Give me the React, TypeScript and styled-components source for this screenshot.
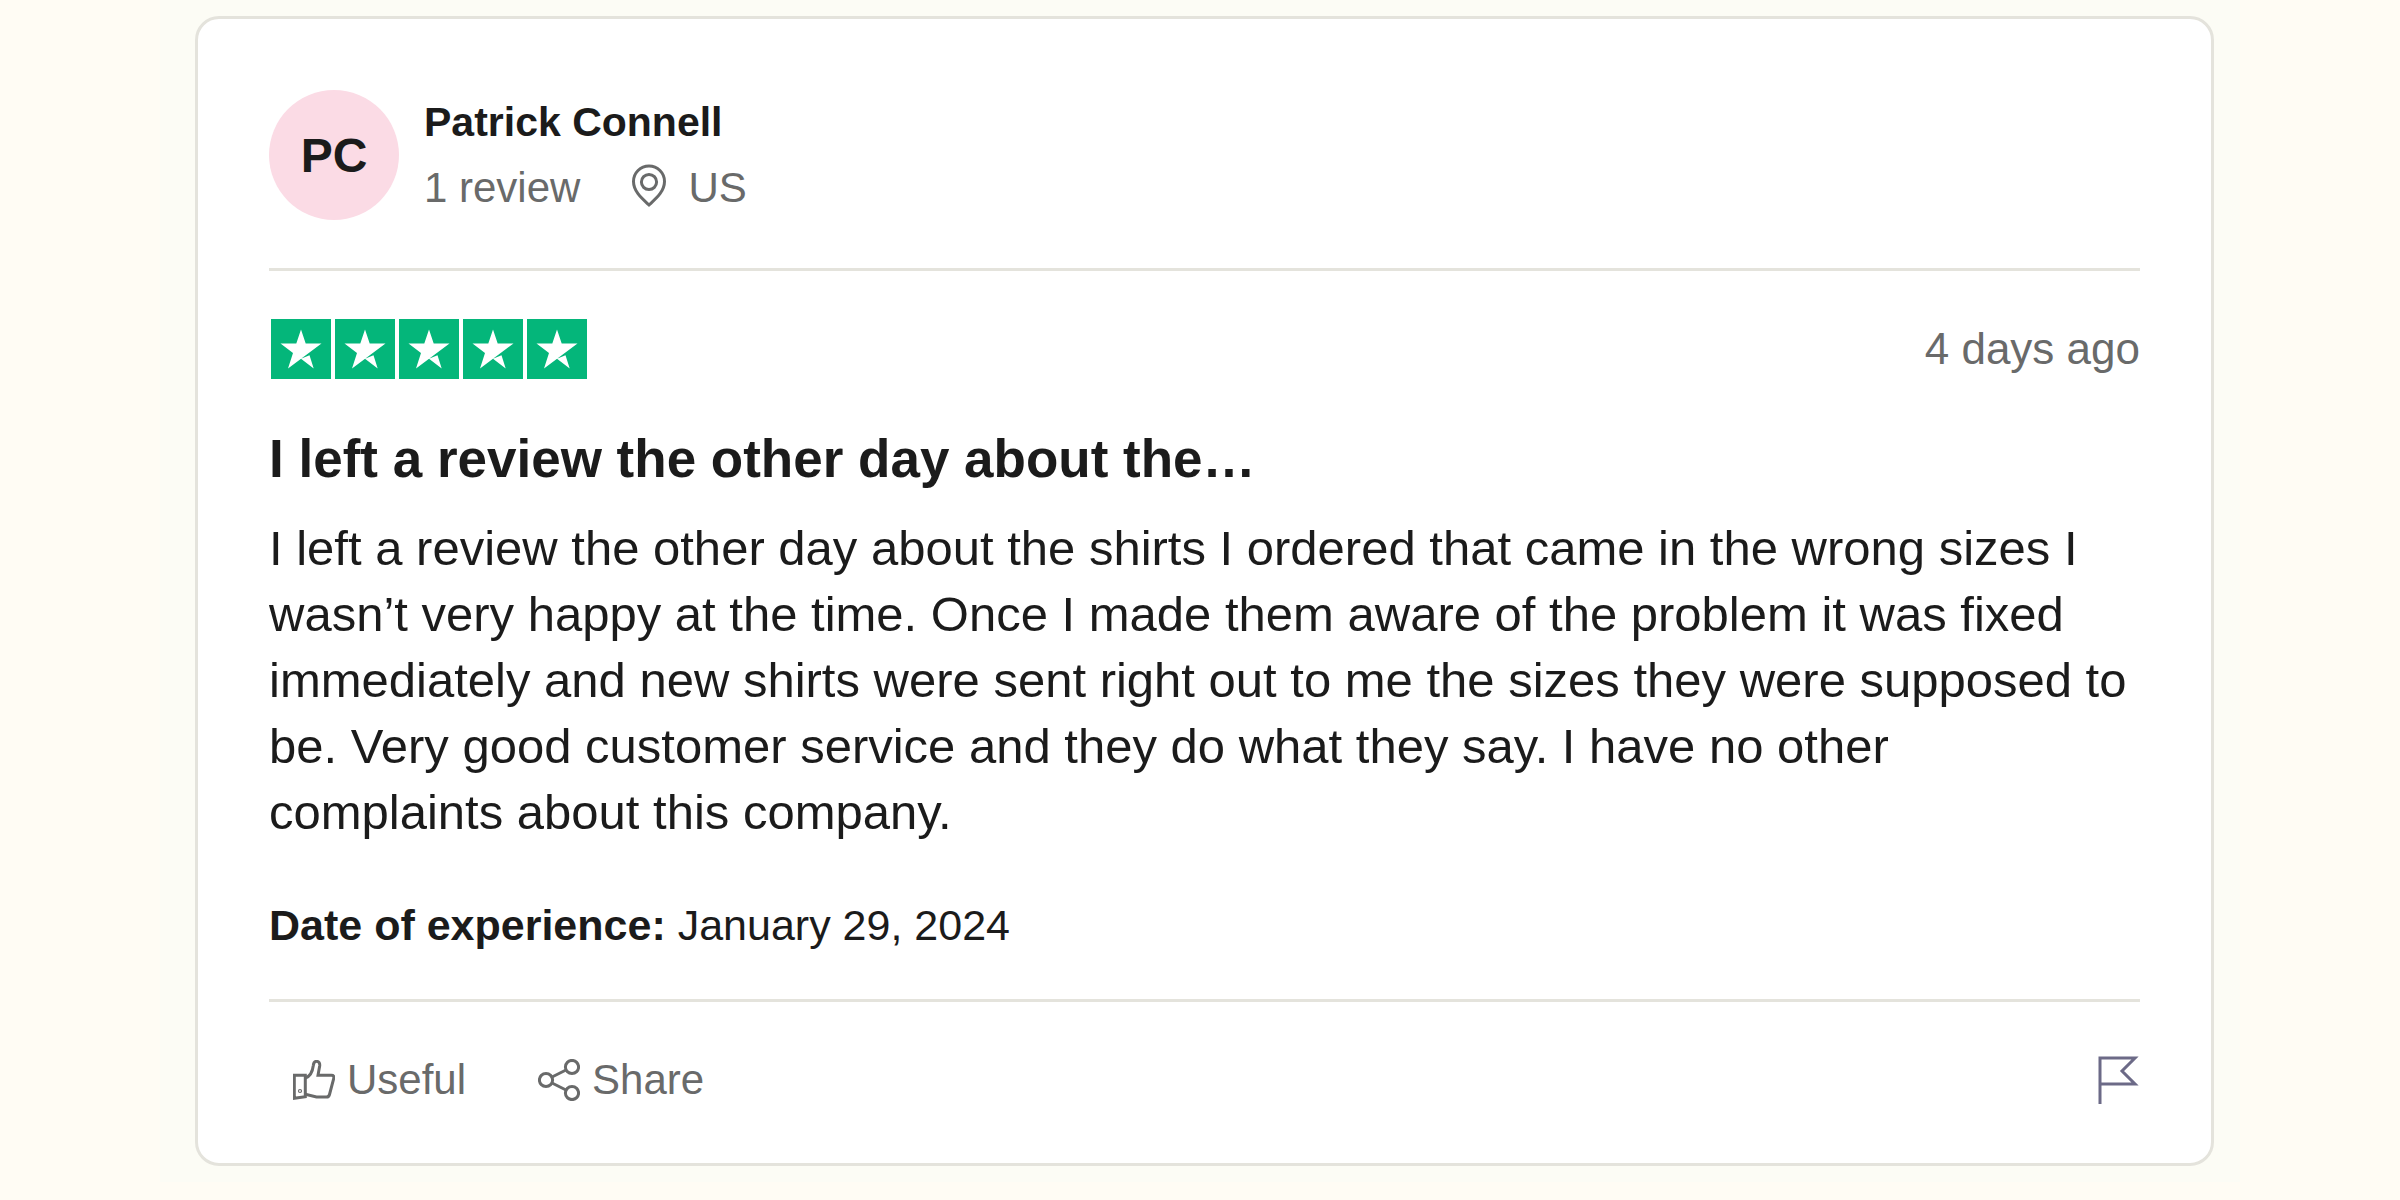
import React from "react";
import styled, { createGlobalStyle } from "styled-components";

const ink = "#1b1b1b";
const muted = "#696a6a";
const line = "#e4e3dc";

const GlobalStyle = createGlobalStyle`
  *, *::before, *::after { box-sizing: border-box; }
  body {
    margin: 0;
    background: #fffcf4;
    color: ${ink};
    font-family: "Liberation Sans", Arial, sans-serif;
  }
  h2, p { margin: 0; }
`;

const Mat = styled.main`
  margin: 0 160px;
  padding: 16px 26px 16px 35px;
  background: #fcfcf5;
`;

const Card = styled.article`
  padding: 71px;
  padding-bottom: 53px;
  border: 3px solid ${line};
  border-radius: 24px;
  background: #fff;
`;

const Header = styled.header`
  display: flex;
  align-items: center;
  gap: 25px;
  padding-bottom: 48px;
  border-bottom: 3px solid ${line};
`;

const Avatar = styled.div`
  display: grid;
  place-items: center;
  width: 130px;
  height: 130px;
  border-radius: 50%;
  background: #fbdbe5;
  font-size: 48px;
  font-weight: 700;
`;

const Author = styled.div`
  display: grid;
  gap: 10px;
  font-size: 42px;
  line-height: 56px;
`;

const Name = styled.a`
  color: ${ink};
  font-size: 41px;
  font-weight: 700;
  text-decoration: none;
`;

const Meta = styled.div`
  display: flex;
  align-items: center;
  gap: 50px;
  color: ${muted};
`;

const Place = styled.span`
  display: flex;
  align-items: center;
  gap: 20px;
`;

const RatingRow = styled.div`
  display: flex;
  align-items: center;
  justify-content: space-between;
  margin-top: 48px;
`;

const Stars = styled.div`
  display: flex;
  gap: 4px;
  padding-left: 2px;
`;

const Star = styled.svg`
  width: 60px;
  height: 60px;
  background: #04b67a;
`;

const Age = styled.time`
  color: ${muted};
  font-size: 44px;
`;

const Title = styled.h2`
  margin-top: 48px;
  font-size: 53px;
  line-height: 64px;
`;

const Body = styled.p`
  margin-top: 24px;
  padding-right: 8px;
  font-size: 49px;
  line-height: 66px;
`;

const Experience = styled.p`
  margin-top: 52px;
  font-size: 43px;
  line-height: 56px;
`;

const Footer = styled.footer`
  display: flex;
  align-items: center;
  gap: 72px;
  margin-top: 46px;
  padding: 48px 0 0 24px;
  border-top: 3px solid ${line};
`;

const Action = styled.button<{ $end?: boolean }>`
  display: flex;
  align-items: center;
  gap: 12px;
  margin-left: ${(p) => (p.$end ? "auto" : "0")};
  padding: 0;
  border: 0;
  background: none;
  color: ${(p) => (p.$end ? "#6c6a87" : muted)};
  font: inherit;
  font-size: 42px;
  line-height: 60px;
  cursor: pointer;
`;

const Icon = styled.svg`
  display: block;
  flex: none;
  fill: none;
  stroke: currentColor;
  stroke-width: 3;
`;

export default function App() {
  return (
    <>
      <GlobalStyle />
      <Mat>
        <Card>
          <Header>
            <Avatar aria-hidden="true">PC</Avatar>
            <Author>
              <Name href="#">Patrick Connell</Name>
              <Meta>
                <span>1 review</span>
                <Place>
                  <Icon width="38" height="48" viewBox="0 0 38 48">
                    <path d="M19 41C12 34.500 3.500 27.500 3.500 17.500a15.500 15.500 0 0 1 31 0C34.500 27.500 26 34.500 19 41z" />
                    <circle cx="19" cy="18" r="7.600" />
                  </Icon>
                  US
                </Place>
              </Meta>
            </Author>
          </Header>

          <RatingRow>
            <Stars role="img" aria-label="Rated 5 out of 5 stars">
              {[1, 2, 3, 4, 5].map((n) => (
                <Star key={n} viewBox="0 0 60 60">
                  <path
                    fill="#fff"
                    d="M30 10.500l4.700 14H50.500L17 49.500l5-15.500L9.500 24.500H25.300zM30 39.700l8.500-3.400L42.700 49.500z"
                  />
                </Star>
              ))}
            </Stars>
            <Age>4 days ago</Age>
          </RatingRow>

          <Title>I left a review the other day about the…</Title>
          <Body>
            I left a review the other day about the shirts I ordered that came in the wrong sizes I
            wasn’t very happy at the time. Once I made them aware of the problem it was fixed
            immediately and new shirts were sent right out to me the sizes they were supposed to
            be. Very good customer service and they do what they say. I have no other
            complaints about this company.
          </Body>
          <Experience>
            <b>Date of experience:</b> January 29, 2024
          </Experience>

          <Footer>
            <Action type="button">
              <Icon width="42" height="40" viewBox="0 0 42 40" strokeWidth="2.400">
                <path d="M1.300 15.300H12.300V36.800L1.300 38.300z" />
                <path d="M12.300 18C17 16.500 19.500 12 20.300 5.500 20.600 2.500 21.500 1.300 23.500 1.300c2.500 0 3.500 2 3.200 4.500L25 15.300H38.500q3 0 2.200 3.200L36.500 34.500q-.6 2.500-3 2.500H23.500L12.300 34.300" />
                <circle cx="7" cy="31" r=".6" />
              </Icon>
              Useful
            </Action>
            <Action type="button">
              <Icon width="42" height="42" viewBox="0 0 42 42">
                <circle cx="8" cy="21" r="6.600" />
                <circle cx="34" cy="8" r="6.600" />
                <circle cx="34" cy="34" r="6.600" />
                <path d="M14 18l14-7M14 24l14 7" />
              </Icon>
              Share
            </Action>
            <Action type="button" $end aria-label="Flag review">
              <Icon width="42" height="48" viewBox="0 0 42 48">
                <path d="M2 48V2h35L24 15 37 28H2" />
              </Icon>
            </Action>
          </Footer>
        </Card>
      </Mat>
    </>
  );
}
